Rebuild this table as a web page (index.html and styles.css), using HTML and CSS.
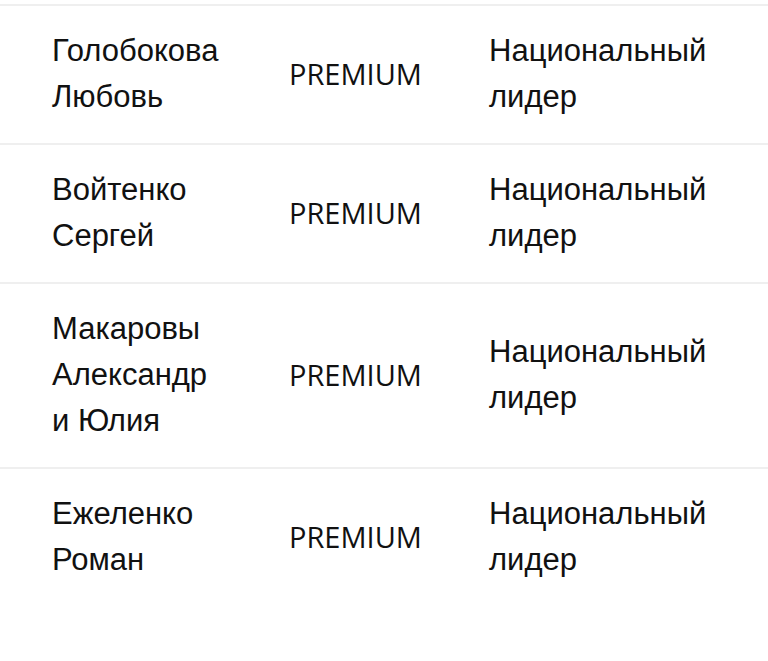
FILE: index.html
```html
<!DOCTYPE html>
<html lang="ru">
<head>
<meta charset="utf-8">
<link rel="stylesheet" href="styles.css">
</head>
<body>
<div class="table">
  <div class="row">
    <div class="name">Голобокова<br>Любовь</div>
    <div class="tier">PREMIUM</div>
    <div class="rank">Национальный<br>лидер</div>
  </div>
  <div class="row">
    <div class="name">Войтенко<br>Сергей</div>
    <div class="tier">PREMIUM</div>
    <div class="rank">Национальный<br>лидер</div>
  </div>
  <div class="row">
    <div class="name">Макаровы<br>Александр<br>и Юлия</div>
    <div class="tier">PREMIUM</div>
    <div class="rank">Национальный<br>лидер</div>
  </div>
  <div class="row last">
    <div class="name">Ежеленко<br>Роман</div>
    <div class="tier">PREMIUM</div>
    <div class="rank">Национальный<br>лидер</div>
  </div>
</div>
</body>
</html>
```
FILE: styles.css
```css
html, body {
  margin: 0;
  padding: 0;
  background: #ffffff;
}
.table {
  padding-top: 4px;
}
.row {
  display: grid;
  grid-template-columns: 237px 200px 1fr;
  align-items: center;
  padding: 22px 0 23px 52px;
  border-top: 2px solid #efefef;
}
.name, .rank {
  font-family: "Liberation Sans", Arial, sans-serif;
  font-size: 31px;
  line-height: 46px;
  color: #111;
}
.tier {
  font-family: "Open Sans", sans-serif;
  font-size: 29px;
  line-height: 46px;
  color: #111;
}
```
